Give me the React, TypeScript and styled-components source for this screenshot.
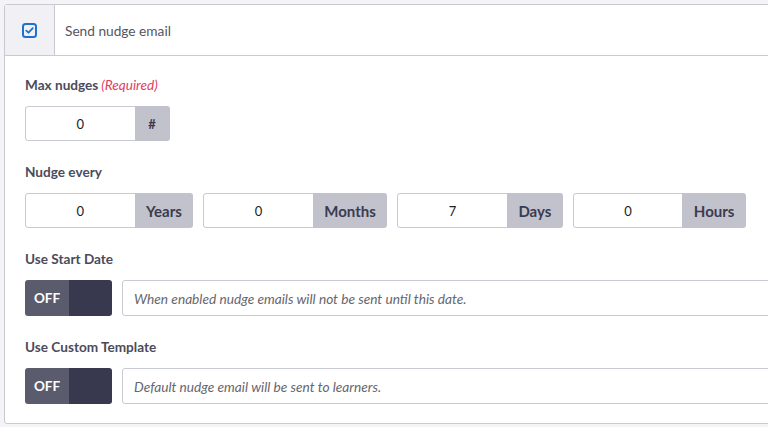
import React from "react";
import styled, { createGlobalStyle } from "styled-components";

const Global = createGlobalStyle`
  html, body { margin: 0; padding: 0; background: #f4f4f7; overflow: hidden; }
  body { font-family: "Source Sans Pro", Lato, "Open Sans", sans-serif; }
  * { box-sizing: border-box; }
`;

const Page = styled.div`
  padding: 4px 0 0 4px;
  width: 820px;
`;

const Card = styled.div`
  background: #fff;
  border: 1px solid #c9c9d3;
  border-radius: 3px;
  width: 800px;
`;

const Header = styled.div`
  display: flex;
  height: 51px;
  border-bottom: 1px solid #c9c9d3;
`;

const CheckCell = styled.div`
  width: 50px;
  background: #f1f1f5;
  border-right: 1px solid #c9c9d3;
  display: flex;
  align-items: center;
  justify-content: center;
`;

const HeaderTitle = styled.div`
  display: flex;
  align-items: center;
  padding-left: 10px;
  font-size: 13.7px;
  color: #55555f;
`;

const Body = styled.div`
  padding: 20px 20px 19px 20px;
  display: flex;
  flex-direction: column;
`;

const Field = styled.div<{ $first?: boolean }>`
  display: flex;
  flex-direction: column;
  margin-top: ${(p) => (p.$first ? "0" : "22px")};
`;

const Label = styled.div`
  font-size: 13.6px;
  line-height: 18px;
  font-weight: 700;
  color: #4b4b5c;
  margin-bottom: 12px;
`;

const Required = styled.span`
  font-weight: 400;
  font-style: italic;
  color: #e0405e;
  margin-left: 3px;
`;

const Row = styled.div`
  display: flex;
  gap: 10px;
`;

const Group = styled.div`
  display: flex;
  height: 35px;
  border-radius: 3px;
  overflow: hidden;
`;

const NumInput = styled.input`
  width: 109.5px;
  height: 35px;
  border: 1px solid #c9c9d3;
  border-right: none;
  border-radius: 3px 0 0 3px;
  text-align: center;
  font-family: inherit;
  font-size: 13px;
  color: #222;
  outline: none;
  padding: 0;
  background: #fff;
`;

const Addon = styled.div`
  background: #c2c2cc;
  color: #3b3b50;
  font-weight: 700;
  font-size: 15px;
  display: flex;
  align-items: center;
  justify-content: center;
  padding: 0 11.5px;
  min-width: 35px;
`;

const HashAddon = styled(Addon)`
  font-size: 13px;
  padding: 0;
  width: 35px;
`;

const ToggleRow = styled.div`
  display: flex;
  gap: 10px;
  height: 36px;
`;

const Toggle = styled.div`
  display: flex;
  width: 87px;
  border-radius: 3px;
  overflow: hidden;
  flex: none;
`;

const ToggleLabel = styled.div`
  width: 44px;
  background: #5b5b6e;
  color: #fff;
  font-weight: 700;
  font-size: 13.5px;
  display: flex;
  align-items: center;
  justify-content: center;
`;

const ToggleKnob = styled.div`
  flex: 1;
  background: #38384f;
`;

const TextInput = styled.input`
  flex: 1;
  height: 36px;
  border: 1px solid #c9c9d3;
  border-radius: 3px;
  padding: 0 11px;
  font-family: inherit;
  font-size: 13.7px;
  font-style: italic;
  outline: none;
  &::placeholder { color: #66666e; }
`;

const CheckIcon = () => (
  <svg width="15" height="15" viewBox="0 0 15 15">
    <rect x="1" y="1" width="13" height="13" rx="2.5" fill="none" stroke="#1d72cf" strokeWidth="2" />
    <path d="M4.3 7.6 L6.5 9.7 L10.8 5.2" fill="none" stroke="#1d72cf" strokeWidth="1.8" strokeLinecap="round" strokeLinejoin="round" />
  </svg>
);

const units = [
  { unit: "Years", value: "0" },
  { unit: "Months", value: "0" },
  { unit: "Days", value: "7" },
  { unit: "Hours", value: "0" },
];

export default function App() {
  return (
    <>
      <Global />
      <Page>
        <Card>
          <Header>
            <CheckCell>
              <CheckIcon />
            </CheckCell>
            <HeaderTitle>Send nudge email</HeaderTitle>
          </Header>
          <Body>
            <Field $first>
              <Label>
                Max nudges<Required>(Required)</Required>
              </Label>
              <Row>
                <Group>
                  <NumInput readOnly value="0" />
                  <HashAddon>#</HashAddon>
                </Group>
              </Row>
            </Field>
            <Field>
              <Label>Nudge every</Label>
              <Row>
                {units.map((u) => (
                  <Group key={u.unit}>
                    <NumInput readOnly value={u.value} />
                    <Addon>{u.unit}</Addon>
                  </Group>
                ))}
              </Row>
            </Field>
            <Field>
              <Label>Use Start Date</Label>
              <ToggleRow>
                <Toggle>
                  <ToggleLabel>OFF</ToggleLabel>
                  <ToggleKnob />
                </Toggle>
                <TextInput readOnly placeholder="When enabled nudge emails will not be sent until this date." />
              </ToggleRow>
            </Field>
            <Field>
              <Label>Use Custom Template</Label>
              <ToggleRow>
                <Toggle>
                  <ToggleLabel>OFF</ToggleLabel>
                  <ToggleKnob />
                </Toggle>
                <TextInput readOnly placeholder="Default nudge email will be sent to learners." />
              </ToggleRow>
            </Field>
          </Body>
        </Card>
      </Page>
    </>
  );
}
